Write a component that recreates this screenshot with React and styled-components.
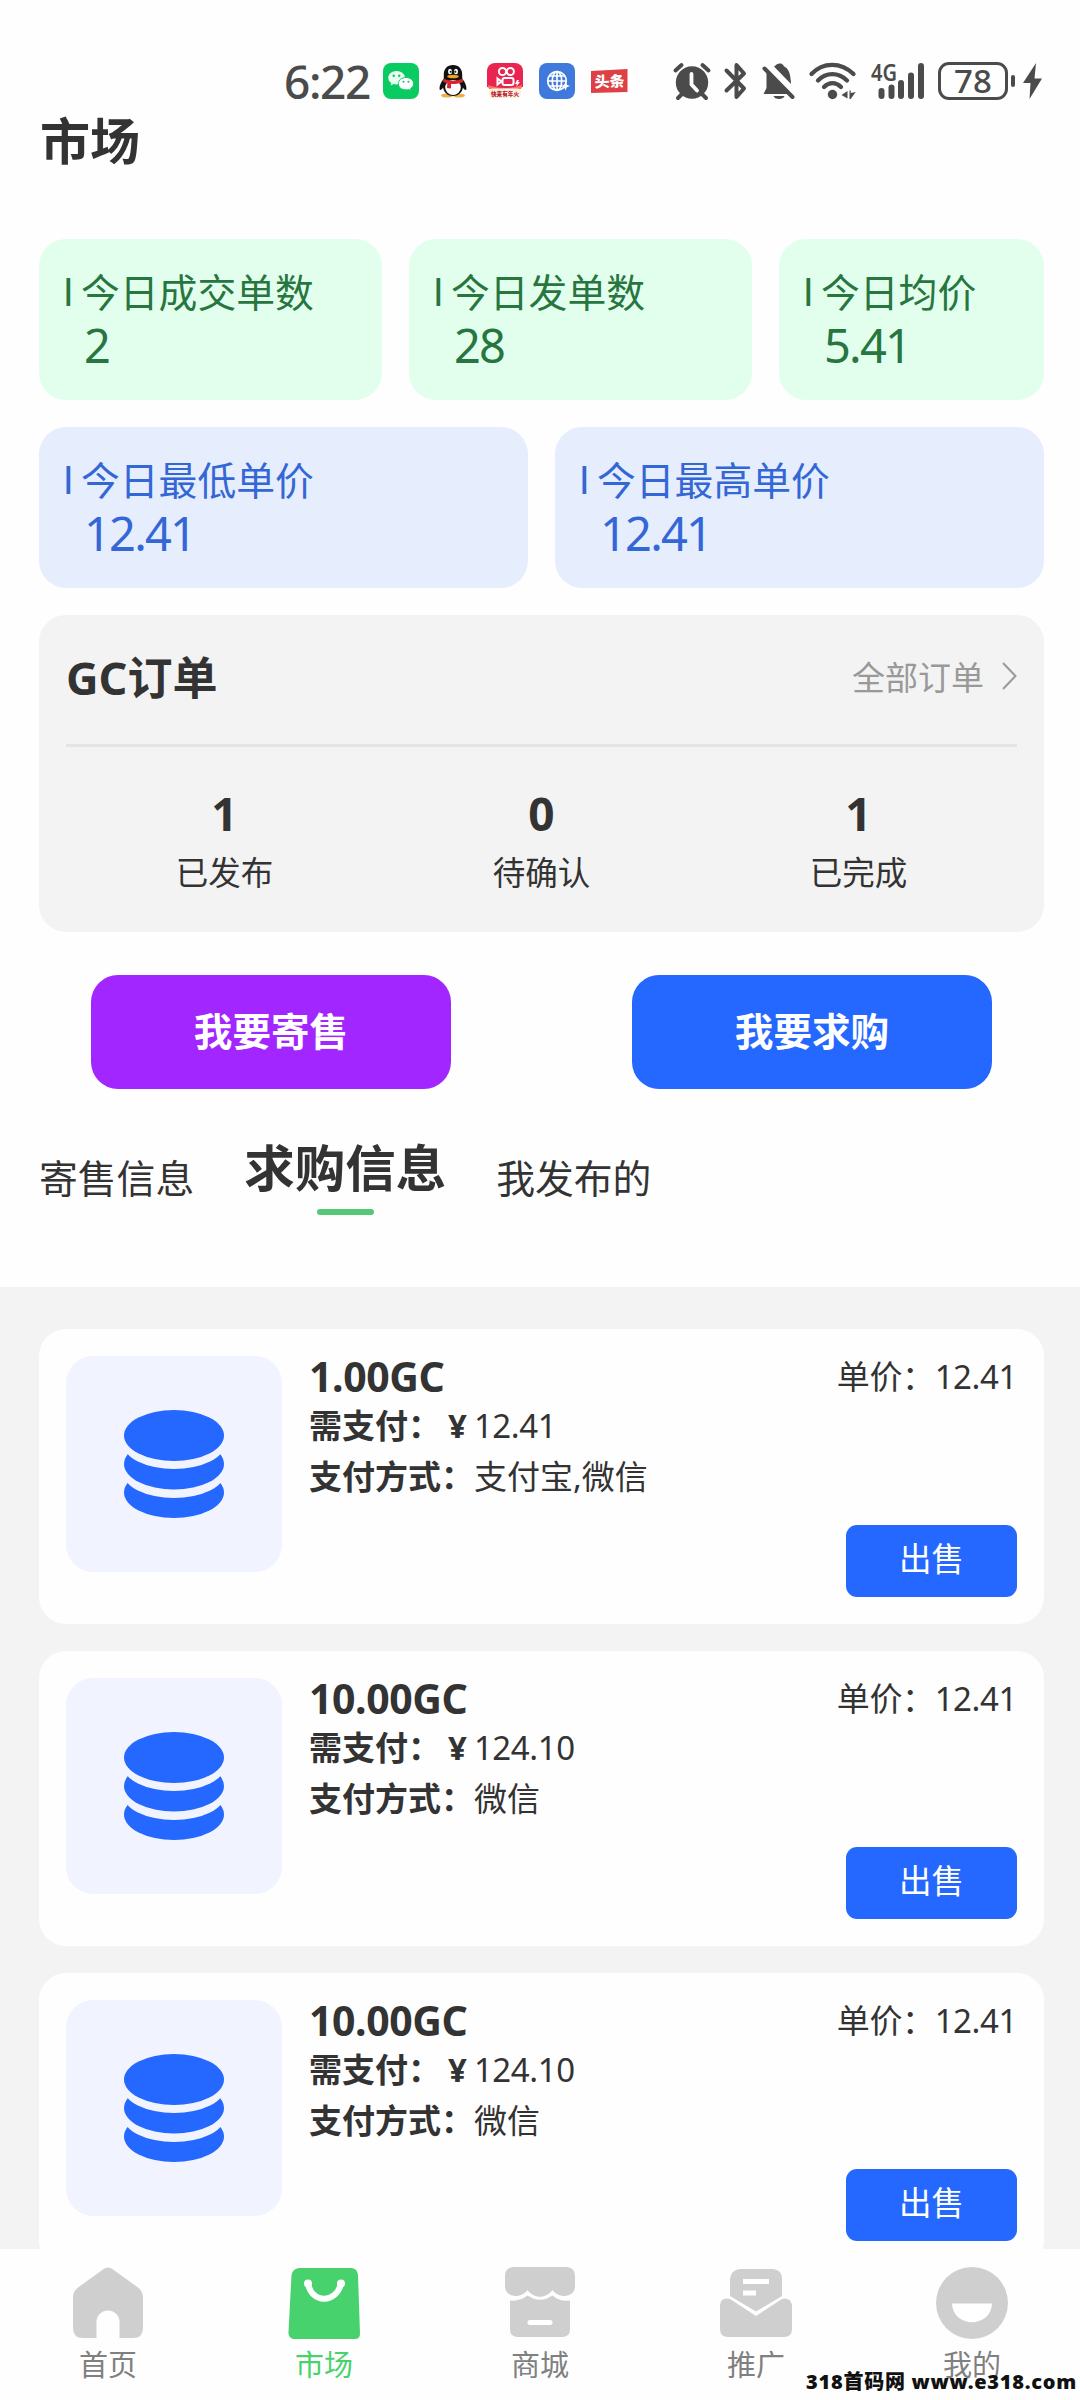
import styled, {createGlobalStyle} from "styled-components";

const GlobalStyle = createGlobalStyle`
    * {
        box-sizing: border-box;
    }
    body {
        margin: 0;
        background: #fefefe;
        color: #333;
        font-family: "Noto Sans", "Noto Sans CJK SC", sans-serif;
    }
    button {
        border: 0;
        padding: 0;
        font-family: inherit;
        color: #fff;
    }
    svg {
        display: block;
        flex: none;
        overflow: visible;
    }
`;

const Screen = styled.div`
    position: relative;
    display: flex;
    flex-direction: column;
    width: 1080px;
    height: 2400px;
    overflow: hidden;
`;

const Content = styled.main`
    flex: 1;
    min-height: 0;
    overflow: hidden;
    display: flex;
    flex-direction: column;
`;

/* ---------- status bar ---------- */

const StatusBar = styled.div`
    flex: none;
    display: flex;
    align-items: center;
    justify-content: space-between;
    height: 105px;
    padding: 57px 38px 0 284px;
    color: #4b4b4b;
`;

const StatusGroup = styled.div`
    display: flex;
    align-items: center;
    gap: ${props => props.gap}px;
`;

const Clock = styled.span`
    width: 83px;
    font-size: 46px;
    font-weight: 500;
    line-height: 56px;
    letter-spacing: -1.4px;
    white-space: nowrap;
`;

const Battery = styled.div`
    display: flex;
    align-items: center;
    justify-content: center;
    width: 70px;
    height: 38px;
    border: 3px solid #4b4b4b;
    border-radius: 11px;
    font-size: 33px;
    font-weight: 500;
    line-height: 32px;
`;

const BatteryCap = styled.span`
    width: 4px;
    height: 12px;
    margin: 0 8px 0 3px;
    border-radius: 2px;
    background: #4b4b4b;
`;

/* ---------- header and stats ---------- */

const PageTitle = styled.h1`
    flex: none;
    height: 134px;
    margin: 0;
    padding: 1px 40px;
    font-size: 50px;
    font-weight: 700;
    line-height: 70px;
`;

const StatRow = styled.div`
    flex: none;
    display: grid;
    grid-template-columns: ${props => props.columns};
    gap: 27px;
    margin: 0 36px 27px 39px;
`;

const StatCard = styled.div`
    height: 161px;
    padding: 26px 0 0 24px;
    border-radius: 27px;
    background: ${props => props.blue ? '#e6edfd' : '#e2ffee'};
    color: ${props => props.blue ? '#3467d6' : '#27763f'};
`;

const StatLabel = styled.div`
    display: flex;
    font-size: 38.8px;
    line-height: 54px;
    white-space: nowrap;
`;

const Tick = styled.span`
    width: 18px;
    padding-top: 2px;
    font-family: Roboto, sans-serif;
    line-height: 52px;
`;

const StatValue = styled.div`
    margin-top: -1px;
    padding-left: 21px;
    font-size: 47px;
    line-height: 54px;
    letter-spacing: -1.8px;
`;

/* ---------- orders ---------- */

const OrderPanel = styled.section`
    flex: none;
    height: 317px;
    margin: 0 36px 0 39px;
    padding: 0 27px;
    border-radius: 27px;
    background: #f3f3f3;
`;

const OrderHead = styled.div`
    display: flex;
    align-items: center;
    justify-content: space-between;
    height: 132px;
    padding-bottom: 8px;
    border-bottom: 3px solid #e4e4e4;
`;

const OrderTitle = styled.h2`
    margin: 0;
    font-size: 45px;
    font-weight: 700;
`;

const AllOrders = styled.div`
    display: flex;
    align-items: center;
    gap: 17px;
    color: #999;
    font-size: 33px;
`;

const OrderCounts = styled.div`
    display: grid;
    grid-template-columns: repeat(3, 1fr);
    padding-top: 38px;
    text-align: center;
`;

const Count = styled.div`
    font-size: 46px;
    font-weight: 700;
    line-height: 56px;
`;

const CountLabel = styled.div`
    margin-top: 7px;
    font-size: 32.5px;
    line-height: 50px;
`;

/* ---------- actions and tabs ---------- */

const Actions = styled.div`
    flex: none;
    display: flex;
    justify-content: space-between;
    margin: 43px 88px 0 91px;
`;

const ActionButton = styled.button`
    width: 360px;
    height: 114px;
    padding-bottom: 7px;
    border-radius: 27px;
    background: ${props => props.color};
    font-size: 38.6px;
    font-weight: 700;
`;

const Tabs = styled.div`
    flex: none;
    display: flex;
    align-items: flex-start;
    gap: 50px;
    height: 198px;
    padding: 49px 39px 0;
`;

const Tab = styled.div`
    padding-top: ${props => props.active ? 0 : 10}px;
    font-size: ${props => props.active ? 50.5 : 38.8}px;
    font-weight: ${props => props.active ? 700 : 400};
    line-height: 60px;

    &::after {
        content: "";
        display: ${props => props.active ? 'block' : 'none'};
        width: 57px;
        height: 6px;
        margin: 11px auto 0;
        border-radius: 3px;
        background: #55c878;
    }
`;

/* ---------- offers ---------- */

const OfferList = styled.div`
    flex: 1;
    min-height: 0;
    padding: 42px 36px 0 39px;
    background: #f3f3f3;
`;

const OfferCard = styled.article`
    display: flex;
    height: 295px;
    margin-bottom: 27px;
    padding: 27px;
    border-radius: 27px;
    background: #fefefe;
`;

const Thumb = styled.div`
    display: flex;
    align-items: center;
    justify-content: center;
    width: 216px;
    height: 216px;
    border-radius: 27px;
    background: #f1f4ff;
`;

const OfferInfo = styled.div`
    flex: 1;
    margin: -4px 0 0 27px;
    font-size: 33px;
    line-height: 51px;
    white-space: nowrap;
`;

const OfferAmount = styled.h3`
    margin: 0;
    font-size: 41px;
    font-weight: 700;
    line-height: 48px;
    letter-spacing: -0.4px;
`;

const Yen = styled.b`
    margin: 0 7px 0 7px;
`;

const Total = styled.span`
    letter-spacing: -0.4px;
`;

const OfferSide = styled.div`
    display: flex;
    flex-direction: column;
    align-items: flex-end;
    justify-content: space-between;
`;

const UnitPrice = styled.div`
    margin-top: -4px;
    font-size: 33px;
    line-height: 50px;
    letter-spacing: -0.4px;
`;

const SellButton = styled.button`
    width: 171px;
    height: 72px;
    padding-bottom: 8px;
    border-radius: 11px;
    background: #2468ff;
    font-size: 32.5px;
`;

/* ---------- bottom navigation ---------- */

const BottomNav = styled.nav`
    flex: none;
    display: grid;
    grid-template-columns: repeat(5, 1fr);
    height: 151px;
    padding-top: 17px;
    background: #fefefe;
`;

const NavItem = styled.div`
    display: flex;
    flex-direction: column;
    align-items: center;
    color: ${props => props.active ? '#48d26d' : '#808080'};
    font-size: 29px;
    line-height: 40px;

    svg {
        margin-bottom: 5px;
    }
`;

const Watermark = styled.div`
    position: absolute;
    right: 3px;
    bottom: 4px;
    color: #111;
    font-size: 20px;
    font-weight: 900;
    line-height: 28px;
    letter-spacing: 0.75px;
    white-space: nowrap;
`;

const WeChatIcon = () => (
    <svg width="36" height="36" viewBox="0 0 36 36">
        <rect width="36" height="36" rx="8" fill="#0acb62" />
        <path d="M13.500 8C8.800 8 5.300 11 5.300 14.800c0 2.100 1.100 4 3 5.300l-.7 2.500 2.900-1.500c1 .3 2 .4 3 .4 4.700 0 8.500-3 8.500-6.700S18.200 8 13.500 8z" fill="#e9fff1" />
        <path d="M23 14.500c-4.300 0-7.700 2.700-7.700 6.200s3.400 6.200 7.700 6.200c1 0 1.900-.1 2.700-.4l2.500 1.300-.6-2.300c1.900-1.100 3-2.900 3-4.800 0-3.500-3.400-6.200-7.600-6.200z" fill="#fff" stroke="#0acb62" strokeWidth="1" />
        <g fill="#0acb62">
            <circle cx="10.700" cy="12.800" r="1.200" />
            <circle cx="16.200" cy="12.800" r="1.200" />
            <circle cx="20.500" cy="18.800" r="1" />
            <circle cx="25.500" cy="18.800" r="1" />
        </g>
    </svg>
);

const PenguinIcon = () => (
    <svg width="36" height="36" viewBox="0 0 36 36">
        <ellipse cx="12" cy="32.500" rx="6" ry="2" fill="#e9b04b" />
        <ellipse cx="24" cy="32.500" rx="6" ry="2" fill="#e9b04b" />
        <path d="M18 2c-6 0-9.200 4.200-9.200 9.500v4.200C6 19 4 23 4.800 27c1.300.3 2.500-1.200 3.300-2.500C9 30 13 33 18 33s9-3 9.900-8.500c.8 1.300 2 2.800 3.300 2.500.8-4-1.200-8-4-11.300v-4.200C27.200 6.200 24 2 18 2z" fill="#111" />
        <ellipse cx="18" cy="24.500" rx="7.800" ry="7.500" fill="#fff" />
        <ellipse cx="15" cy="8.500" rx="2" ry="2.700" fill="#fff" />
        <ellipse cx="21" cy="8.500" rx="2" ry="2.700" fill="#fff" />
        <circle cx="15.600" cy="8.800" r="1" fill="#111" />
        <circle cx="20.400" cy="8.800" r="1" fill="#111" />
        <ellipse cx="18" cy="13.500" rx="5.800" ry="1.800" fill="#f5a31c" />
        <path d="M8.500 15.500c6 3 13 3 19 0l.8 3.200c-4 2-8 2.600-12.300 2.300v4.500l-4-.5.4-4.800c-1.700-.5-3-1-4.400-1.800z" fill="#d8262f" />
    </svg>
);

const KuaishouIcon = () => (
    <svg width="36" height="36" viewBox="0 0 36 36">
        <path d="M0 24V8a8 8 0 0 1 8-8h20a8 8 0 0 1 8 8v16l-6 1.500H7z" fill="#ea2450" />
        <path d="M1 22c10 4 24 4 34 0l-1 4H2z" fill="#f8785e" />
        <rect x="2" y="25.500" width="32" height="9.500" rx="4" fill="#fff0e2" />
        <g fill="none" stroke="#fff" strokeWidth="2">
            <circle cx="15.500" cy="8.500" r="3.600" />
            <circle cx="23.300" cy="8.500" r="3.600" />
            <rect x="15.500" y="15" width="11" height="7" rx="2" />
            <path d="M10.500 15.500v6l4-3z" />
        </g>
        <path d="M30 17l-2 4h2l-1 3 4-5h-2l1-2z" fill="#fff" />
        <text x="4" y="32.500" fontSize="5.600" fontWeight="900" fill="#b5202e">快来有年火</text>
    </svg>
);

const GlobeIcon = () => (
    <svg width="36" height="36" viewBox="0 0 36 36">
        <rect width="36" height="36" rx="8" fill="#4079dc" />
        <g fill="none" stroke="#fff" strokeWidth="1.700">
            <circle cx="18" cy="18" r="9.300" />
            <ellipse cx="18" cy="18" rx="4.700" ry="9.300" />
            <path d="M18 8.700v18.600M8.700 18h18.600M10.500 13h15M10.500 23h13" />
        </g>
        <path d="M26.500 18.500l1.300 3.200 3.200 1.300-3.200 1.300-1.300 3.200-1.300-3.200-3.200-1.300 3.200-1.300z" fill="#fff" />
    </svg>
);

const ToutiaoIcon = () => (
    <svg width="37" height="36" viewBox="0 0 37 36">
        <path d="M0 8l36.500-2v23L0 30z" fill="#dd4045" />
        <text x="3.500" y="24" fontSize="15" fontWeight="900" fill="#fff" transform="rotate(-2 18 18)">头条</text>
    </svg>
);

const AlarmIcon = () => (
    <svg width="38" height="38" viewBox="0 0 38 38">
        <g stroke="#4b4b4b" strokeWidth="4" strokeLinecap="round">
            <path d="M2.500 8.500l6-5.500M35.500 8.500l-6-5.500M9 32l-4 4M29 32l4 4" />
        </g>
        <circle cx="19" cy="20.500" r="16.200" fill="#4b4b4b" />
        <path d="M18.500 12v10.500l5.500 6" fill="none" stroke="#fefefe" strokeWidth="3.800" strokeLinecap="round" strokeLinejoin="round" />
    </svg>
);

const BluetoothIcon = () => (
    <svg width="24" height="38" viewBox="0 0 24 38">
        <path d="M2.500 8.500L20 26.500l-7.500 8.500V3L20 11.500 2.500 28.500" fill="none" stroke="#4b4b4b" strokeWidth="4" strokeLinecap="round" strokeLinejoin="round" />
    </svg>
);

const BellOffIcon = () => (
    <svg width="34" height="38" viewBox="0 0 34 38">
        <path d="M4.500 10.500L26.500 32H1.500l3-6z" fill="#4b4b4b" />
        <path d="M12 4.500c1.500 0 2-3 5.500-3s4 2 4.500 3c4.500 2 6.500 6 7 17.500z" fill="#4b4b4b" />
        <path d="M11.500 34h11c-1 4-10 4-11 0z" fill="#4b4b4b" />
        <path d="M2.500 6.500l28 28.500" stroke="#4b4b4b" strokeWidth="4" strokeLinecap="round" />
    </svg>
);

const WifiIcon = () => (
    <svg width="48" height="38" viewBox="0 0 48 38">
        <g fill="none" stroke="#4b4b4b" strokeWidth="4.300" strokeLinecap="round">
            <path d="M2.500 12C14-.2 32-.2 44.500 12" />
            <path d="M9 18.500c8-8.500 20.500-8.500 29 0" />
            <path d="M15 25c5-5.300 12-5.300 17 0" />
        </g>
        <circle cx="23.500" cy="32.500" r="4.700" fill="#4b4b4b" />
        <path d="M38.500 29v7.500L32.500 33zM40.500 28.500h1.200V31l5-1-5 7h-1.200z" fill="#4b4b4b" />
    </svg>
);

const SignalIcon = () => (
    <svg width="54" height="38" viewBox="0 0 54 38">
        <text x="0" y="19" fontSize="24" fontWeight="600" fill="#4b4b4b" textLength="26" lengthAdjust="spacingAndGlyphs">4G</text>
        <path d="M10.500 29v5M20.500 25.500v8.500M30 21v13M40 13.500v20.500M50 4v30" stroke="#4b4b4b" strokeWidth="6" strokeLinecap="round" />
    </svg>
);

const BoltIcon = () => (
    <svg width="19" height="38" viewBox="0 0 19 38">
        <path d="M13 1L0 21h7.500L6.500 37 19 16.500h-7.500z" fill="#4b4b4b" />
    </svg>
);

const ChevronIcon = () => (
    <svg width="16" height="30" viewBox="0 0 16 30">
        <path d="M2 2l12.500 13L2 28" fill="none" stroke="#999" strokeWidth="2" />
    </svg>
);

const CoinsIcon = () => (
    <svg width="100" height="108" viewBox="0 0 100 108">
        <g fill="#2468ff">
            <ellipse cx="50" cy="82.500" rx="50" ry="25.500" />
            <ellipse cx="50" cy="62.500" rx="51" ry="25.500" fill="#f1f4ff" />
            <ellipse cx="50" cy="54" rx="50" ry="25.500" />
            <ellipse cx="50" cy="33.500" rx="51" ry="25.500" fill="#f1f4ff" />
            <ellipse cx="50" cy="25.500" rx="50" ry="25.500" />
        </g>
    </svg>
);

const HomeIcon = () => (
    <svg width="72" height="74" viewBox="0 0 72 74">
        <path d="M31 3.500q5-4 10 0l25 18q5 4 5 10V62q0 10-10 10H47.500V56a11.500 11.500 0 0 0-23 0v16H11Q1 72 1 62V31.500q0-6 5-10z" fill="#cfcfcf" />
    </svg>
);

const BagIcon = () => (
    <svg width="72" height="74" viewBox="0 0 72 74">
        <path d="M11 2h52q6 0 7 7l2 59q0 5-5 5H6q-6-1-5.500-7L3.500 9q1-6 7.500-7z" fill="#48d26d" />
        <path d="M20 17c3 21 29 21 33 0" fill="none" stroke="#fff" strokeWidth="6" strokeLinecap="round" />
        <circle cx="20" cy="17.500" r="4" fill="#fff" />
        <circle cx="53" cy="17.500" r="4" fill="#fff" />
    </svg>
);

const ShopIcon = () => (
    <svg width="72" height="74" viewBox="0 0 72 74">
        <path d="M9 1h54q8 1 8 9v10c0 12-16 13-22.500 4C42 33 30 33 23.500 24 17 33 1 32 1 20V10q0-8 8-9z" fill="#cfcfcf" />
        <path d="M6 34.500q10 1 17.500-5Q36 38 48.500 29.500 56 36 66 34.500V63q0 8-8 8H14q-8 0-8-8z" fill="#cfcfcf" />
        <path d="M26 56.500h20" stroke="#fff" strokeWidth="5" strokeLinecap="round" />
    </svg>
);

const MailIcon = () => (
    <svg width="72" height="74" viewBox="0 0 72 74">
        <path d="M20 3h33q9 1 9 10v17L36 45.500 10 30V13q1-9 10-10z" fill="#cfcfcf" />
        <path d="M0 39q1-8 10-6l26 17 26-17q8-2 10 6v24q0 8-8 8H8q-8 0-8-8z" fill="#cfcfcf" />
        <path d="M23 13h26v5H23zM23 24.500h13v5H23z" fill="#fff" />
    </svg>
);

const SmileIcon = () => (
    <svg width="72" height="74" viewBox="0 0 72 74">
        <circle cx="36" cy="37" r="36" fill="#cfcfcf" />
        <path d="M16 37.500h40c-1 25-39 25-40 0z" fill="#fff" />
    </svg>
);

const dealStats = [
    {label: '今日成交单数', value: '2'},
    {label: '今日发单数', value: '28'},
    {label: '今日均价', value: '5.41'},
];

const priceStats = [
    {label: '今日最低单价', value: '12.41'},
    {label: '今日最高单价', value: '12.41'},
];

const orderCounts = [
    {label: '已发布', value: 1},
    {label: '待确认', value: 0},
    {label: '已完成', value: 1},
];

const offers = [
    {id: 1, amount: '1.00GC', total: '12.41', methods: '支付宝,微信', price: '12.41'},
    {id: 2, amount: '10.00GC', total: '124.10', methods: '微信', price: '12.41'},
    {id: 3, amount: '10.00GC', total: '124.10', methods: '微信', price: '12.41'},
];

const navItems = [
    {label: '首页', Icon: HomeIcon},
    {label: '市场', Icon: BagIcon, active: true},
    {label: '商城', Icon: ShopIcon},
    {label: '推广', Icon: MailIcon},
    {label: '我的', Icon: SmileIcon},
];

const Stat = ({label, value, blue}) => (
    <StatCard blue={blue}>
        <StatLabel><Tick>I</Tick>{label}</StatLabel>
        <StatValue>{value}</StatValue>
    </StatCard>
);

const Offer = ({amount, total, methods, price}) => (
    <OfferCard>
        <Thumb><CoinsIcon /></Thumb>
        <OfferInfo>
            <OfferAmount>{amount}</OfferAmount>
            <div><b>需支付：</b><Yen>¥</Yen><Total>{total}</Total></div>
            <div><b>支付方式：</b>{methods}</div>
        </OfferInfo>
        <OfferSide>
            <UnitPrice>单价：{price}</UnitPrice>
            <SellButton type='button'>出售</SellButton>
        </OfferSide>
    </OfferCard>
);

const App = () => {
    return (
        <Screen lang='zh-CN'>
            <GlobalStyle />
            <StatusBar>
                <StatusGroup gap={16}>
                    <Clock>6:22</Clock>
                    <WeChatIcon />
                    <PenguinIcon />
                    <KuaishouIcon />
                    <GlobeIcon />
                    <ToutiaoIcon />
                </StatusGroup>
                <StatusGroup gap={13.4}>
                    <AlarmIcon />
                    <BluetoothIcon />
                    <BellOffIcon />
                    <WifiIcon />
                    <SignalIcon />
                    <StatusGroup gap={0}>
                        <Battery>78</Battery>
                        <BatteryCap />
                        <BoltIcon />
                    </StatusGroup>
                </StatusGroup>
            </StatusBar>
            <Content>
                <PageTitle>市场</PageTitle>
                <StatRow columns='343px 343px 1fr'>
                    {dealStats.map(stat => <Stat key={stat.label} {...stat} />)}
                </StatRow>
                <StatRow columns='1fr 1fr'>
                    {priceStats.map(stat => <Stat key={stat.label} {...stat} blue={true} />)}
                </StatRow>
                <OrderPanel>
                    <OrderHead>
                        <OrderTitle>GC订单</OrderTitle>
                        <AllOrders>全部订单<ChevronIcon /></AllOrders>
                    </OrderHead>
                    <OrderCounts>
                        {orderCounts.map(({label, value}) => (
                            <div key={label}>
                                <Count>{value}</Count>
                                <CountLabel>{label}</CountLabel>
                            </div>
                        ))}
                    </OrderCounts>
                </OrderPanel>
                <Actions>
                    <ActionButton type='button' color='#a226ff'>我要寄售</ActionButton>
                    <ActionButton type='button' color='#2468ff'>我要求购</ActionButton>
                </Actions>
                <Tabs>
                    <Tab>寄售信息</Tab>
                    <Tab active={true}>求购信息</Tab>
                    <Tab>我发布的</Tab>
                </Tabs>
                <OfferList>
                    {offers.map(offer => <Offer key={offer.id} {...offer} />)}
                </OfferList>
            </Content>
            <BottomNav>
                {navItems.map(({label, Icon, active}) => (
                    <NavItem key={label} active={active}>
                        <Icon />
                        {label}
                    </NavItem>
                ))}
            </BottomNav>
            <Watermark>318首码网 www.e318.com</Watermark>
        </Screen>
    );
}

export default App;
